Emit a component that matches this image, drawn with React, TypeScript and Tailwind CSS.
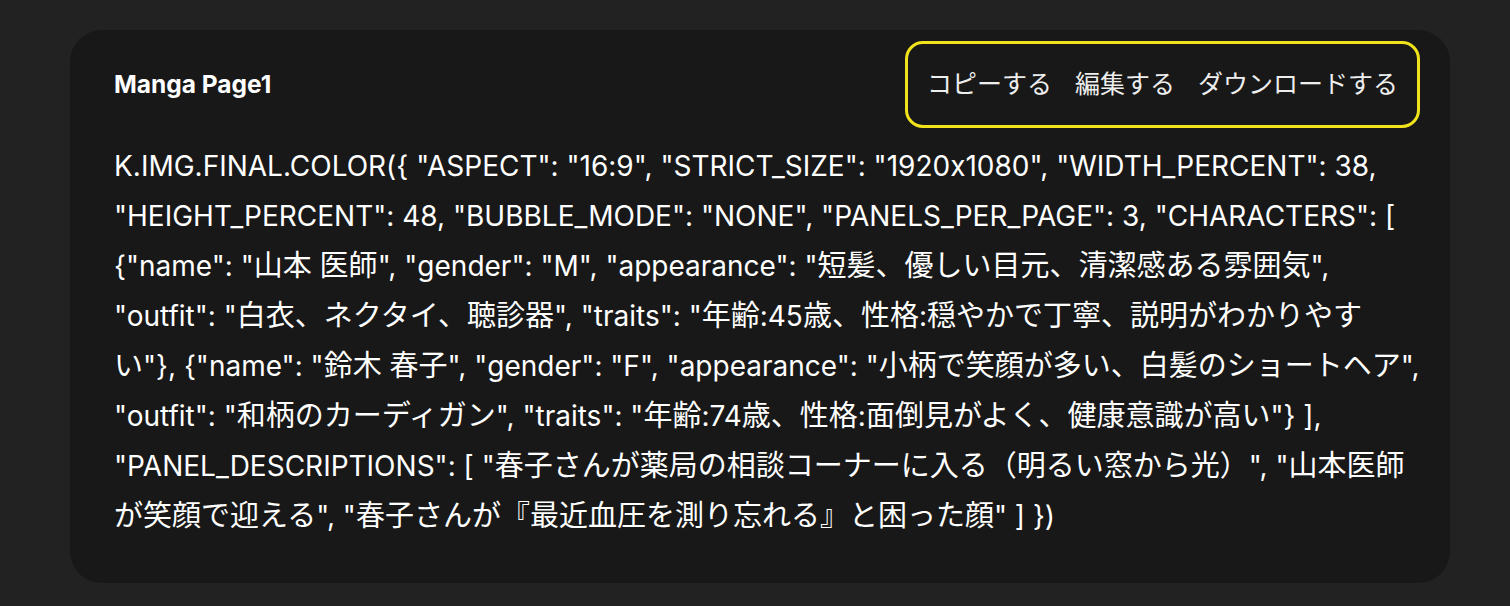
const actions = ['コピーする', '編集する', 'ダウンロードする'];

// The prompt is shown exactly as it wraps in the design
const promptLines = [
  'K.IMG.FINAL.COLOR({ "ASPECT": "16:9", "STRICT_SIZE": "1920x1080", "WIDTH_PERCENT": 38,',
  '"HEIGHT_PERCENT": 48, "BUBBLE_MODE": "NONE", "PANELS_PER_PAGE": 3, "CHARACTERS": [',
  '{"name": "山本 医師", "gender": "M", "appearance": "短髪、優しい目元、清潔感ある雰囲気",',
  '"outfit": "白衣、ネクタイ、聴診器", "traits": "年齢:45歳、性格:穏やかで丁寧、説明がわかりやす',
  'い"}, {"name": "鈴木 春子", "gender": "F", "appearance": "小柄で笑顔が多い、白髪のショートヘア",',
  '"outfit": "和柄のカーディガン", "traits": "年齢:74歳、性格:面倒見がよく、健康意識が高い"} ],',
  '"PANEL_DESCRIPTIONS": [ "春子さんが薬局の相談コーナーに入る（明るい窓から光）", "山本医師',
  'が笑顔で迎える", "春子さんが『最近血圧を測り忘れる』と困った顔" ] })',
];

// Japanese runs sit a little larger than the latin text
const cjk = /([\u3000-\u30ff\u4e00-\u9fff\uff00-\uffef]+)/;

function PromptLine({ text }: { text: string }) {
  return (
    <span className="block whitespace-nowrap">
      {text.split(cjk).map((part, i) =>
        i % 2 === 1 ? (
          <span key={i} className="text-[29px]">
            {part}
          </span>
        ) : (
          part
        ),
      )}
    </span>
  );
}

export default function App() {
  return (
    <div className="min-h-screen bg-[#222222] pt-[30px] font-['Inter','Noto_Sans_CJK_JP',sans-serif] [font-feature-settings:'calt'_0]">
      <div className="ml-[70px] w-[1380px] rounded-[32px] bg-[#181818] pl-[44px] pr-[30px] pt-[11px] pb-[42px]">
        {/* Header */}
        <div className="flex items-center justify-between">
          <h2 className="text-[24.5px] font-bold text-white">Manga Page1</h2>
          <div className="flex h-[87px] items-center gap-[23px] rounded-[18px] border-[3px] border-[#f0e31c] px-[19px]">
            {actions.map((label) => (
              <button key={label} className="text-[25px] text-[#eeeeee]">
                {label}
              </button>
            ))}
          </div>
        </div>

        {/* Prompt */}
        <p className="mt-[13px] text-[28px] leading-[50px] text-white">
          {promptLines.map((line) => (
            <PromptLine key={line} text={line} />
          ))}
        </p>
      </div>
    </div>
  );
}
